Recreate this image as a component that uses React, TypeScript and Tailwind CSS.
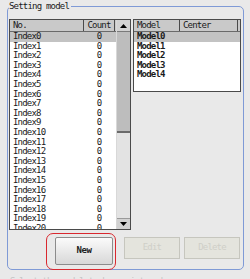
import React from "react";

const indexRows = Array.from({ length: 21 }, (_, i) => `Index${i}`);
const modelRows = ["Model0", "Model1", "Model2", "Model3", "Model4"];

function UpArrow() {
  return (
    <svg width="7" height="4" viewBox="0 0 7 4">
      <polygon points="3.5,0 7,4 0,4" fill="#000" />
    </svg>
  );
}
function DownArrow() {
  return (
    <svg width="7" height="4" viewBox="0 0 7 4">
      <polygon points="0,0 7,0 3.5,4" fill="#000" />
    </svg>
  );
}

export default function App() {
  return (
    <div className="w-[250px] h-[279px] bg-[#e9e9e9] overflow-hidden font-['DejaVu_Sans_Mono',monospace] text-[9px] tracking-[-0.8px] text-[#1a1a1a]">
      <div className="ml-[7px] mt-[6px] w-[237px] h-[264px] border border-[#7f9ad6] rounded-[5px] relative flex flex-col">
        <span className="absolute left-[1px] top-[-7px] bg-[#e9e9e9] leading-[12px] pr-[2px]">
          Setting model
        </span>

        <div className="flex pt-[12px] pl-[1px] gap-[2px] items-start">
          {/* left list */}
          <div className="w-[122px] h-[211px] border border-[#4a4a4a] flex bg-white">
            <div className="w-[106px] flex flex-col overflow-hidden">
              <div className="h-[12px] shrink-0 flex bg-[#c9c9c9] border-b border-[#6a6a6a] leading-[11px]">
                <div className="w-[73px] pl-[3px]">No.</div>
                <div className="w-[32px] border-l border-r border-[#4a4a4a] text-center">Count</div>
              </div>
              {indexRows.map((r, i) => (
                <div
                  key={r}
                  className={`h-[9.6px] shrink-0 flex leading-[9.6px] ${i === 0 ? "bg-[#c3c3c3]" : ""}`}
                >
                  <div className="w-[73px] pl-[3px]">{r}</div>
                  <div className="w-[32px] text-center">0</div>
                </div>
              ))}
            </div>
            <div className="w-[14px] flex flex-col bg-[#e3e3e3] border-l border-[#d8d8d8]">
              <div className="h-[12px] shrink-0 flex items-center justify-center bg-[#d2d2d2] border-b border-[#7a7a7a]">
                <UpArrow />
              </div>
              <div className="h-[101px] shrink-0 bg-[#bdbdbd] border-b-2 border-[#6a6a6a]" />
              <div className="flex-1" />
              <div className="h-[11px] shrink-0 flex items-center justify-center bg-[#d2d2d2] border-t border-[#9a9a9a]">
                <DownArrow />
              </div>
            </div>
          </div>

          {/* right list */}
          <div className="w-[108px] h-[73px] border border-[#4a4a4a] flex flex-col bg-white">
            <div className="h-[12px] shrink-0 flex bg-[#c9c9c9] border-b border-[#6a6a6a] leading-[11px]">
              <div className="w-[45px] pl-[3px]">Model</div>
              <div className="w-[59px] border-l border-r border-[#4a4a4a] pl-[3px]">Center</div>
            </div>
            {modelRows.map((r, i) => (
              <div
                key={r}
                className={`h-[9.6px] shrink-0 leading-[9.6px] pl-[3px] font-bold ${i === 0 ? "bg-[#c3c3c3]" : ""}`}
              >
                {r}
              </div>
            ))}
          </div>
        </div>

        {/* buttons */}
        <div className="flex items-start mt-[7px] pl-[47px]">
          <div className="relative">
            <div className="absolute left-[-9px] top-[-4px] w-[70px] h-[37px] border-[1.5px] border-[#d9282f] rounded-[7px]" />
            <button className="w-[58px] h-[28px] border border-[#8c8c8c] rounded-[2px] bg-gradient-to-b from-[#fbfbfb] to-[#d8d8d8] font-bold text-[9px] tracking-[-0.5px] text-[#222]">
              New
            </button>
          </div>
          <button className="ml-[11px] w-[56px] h-[22px] border border-[#c6c6be] bg-[#e4e4dd] text-[#cfcfc8] text-[9px]">
            Edit
          </button>
          <button className="ml-[4px] w-[56px] h-[22px] border border-[#c6c6be] bg-[#e4e4dd] text-[#cfcfc8] text-[9px]">
            Delete
          </button>
        </div>
      </div>
      <div className="mt-[5px] pl-[10px] text-[#c4c4c4] leading-[12px] whitespace-nowrap">
        Select the model to be registered.
      </div>
    </div>
  );
}
